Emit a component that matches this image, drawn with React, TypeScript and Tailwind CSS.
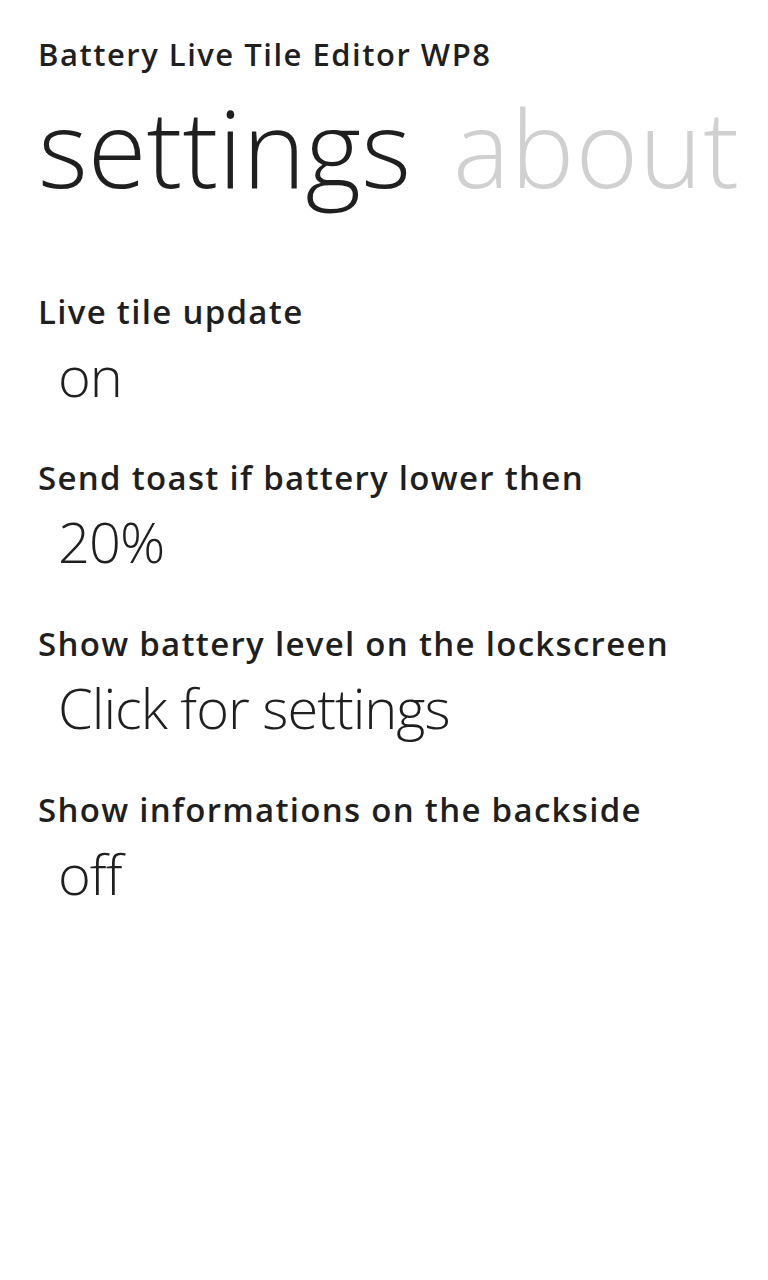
import React from "react";

const SETTINGS = [
  { label: "Live tile update", value: "on" },
  { label: "Send toast if battery lower then", value: "20%" },
  { label: "Show battery level on the lockscreen", value: "Click for settings" },
  { label: "Show informations on the backside", value: "off" },
];

function SettingRow({ label, value }: { label: string; value: string }) {
  return (
    <div className="flex flex-col">
      <div className="text-[33px] leading-[40px] font-semibold tracking-[1.3px] text-[#1f1f1f] whitespace-nowrap">
        {label}
      </div>
      <div className="mt-[3px] pl-5 text-[56px] leading-[80px] font-light tracking-[-1px] text-[#1f1f1f] whitespace-nowrap">
        {value}
      </div>
    </div>
  );
}

export default function App() {
  return (
    <div
      className="w-[768px] h-[1280px] bg-white overflow-hidden pl-[38px] pt-[36px]"
      style={{ fontFamily: '"Open Sans", "Noto Sans", sans-serif' }}
    >
      <div className="text-[31px] leading-[36px] font-semibold tracking-[1.5px] text-[#1f1f1f] whitespace-nowrap">
        Battery Live Tile Editor WP8
      </div>
      <div className="mt-[10px] flex gap-[42px] text-[107px] leading-[130px] font-light whitespace-nowrap">
        <span className="text-[#1f1f1f]">settings</span>
        <span className="text-[#d0d0d0] tracking-[1px]">about</span>
      </div>
      <div className="mt-[80px] flex flex-col gap-[43px]">
        {SETTINGS.map((s) => (
          <SettingRow key={s.label} label={s.label} value={s.value} />
        ))}
      </div>
    </div>
  );
}
